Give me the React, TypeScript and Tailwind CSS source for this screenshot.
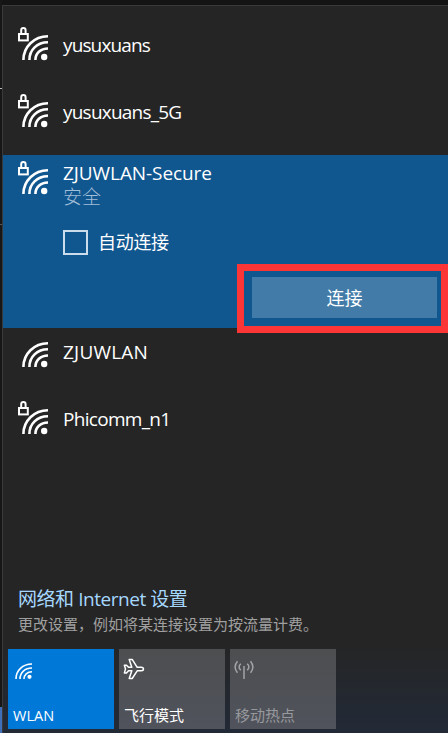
import React from "react";

const latin = "font-['Open_Sans','Noto_Sans_CJK_SC',sans-serif]";
const cjk = "font-['Noto_Sans_CJK_SC',sans-serif]";

function SignalIcon({ locked = false }: { locked?: boolean }) {
  return (
    <svg width="34" height="36" viewBox="0 0 34 36" fill="none" stroke="#fff" className="block shrink-0">
      {locked && (
        <g>
          <path d="M5.2 7.5V4.2a2.2 2.2 0 0 1 4.4 0V7.5" strokeWidth="2" />
          <rect x="3" y="8" width="8.8" height="6.4" strokeWidth="2" />
        </g>
      )}
      <path d="M7.4 34C7.4 21 18 10.2 32 10.2M13.4 34C13.4 24 21 16.3 32 16.3M19.4 34C19.4 27.5 24.5 22.5 32 22.5" strokeWidth="2.6" />
      <circle cx="28.2" cy="31" r="3.2" fill="#fff" stroke="none" />
    </svg>
  );
}

function NetworkName({ children, tracking }: { children: React.ReactNode; tracking: string }) {
  return <span className={`${latin} ${tracking} block whitespace-nowrap text-[19px] leading-6 text-white`}>{children}</span>;
}

function Network({ name, tracking, locked = false }: { name: string; tracking: string; locked?: boolean }) {
  return (
    <div className="flex h-[67px] shrink-0 pt-[5px] pl-[13px]">
      <SignalIcon locked={locked} />
      <div className="ml-[13px] pt-[7px]"><NetworkName tracking={tracking}>{name}</NetworkName></div>
    </div>
  );
}

function SelectedNetwork() {
  return (
    <div className="h-[173px] shrink-0 bg-[#10568f]">
      <div className="flex h-[74px] pt-[5px] pl-[13px]">
        <SignalIcon locked />
        <div className="ml-[13px] pt-[1px]">
          <NetworkName tracking="tracking-[-0.08px]">ZJUWLAN-Secure</NetworkName>
          <div className={`${cjk} text-[19px] leading-[22px] font-light text-[#a3bfd8]`}>安全</div>
        </div>
      </div>
      <div className="flex h-[26px] items-center pl-[60px]">
        <span className="size-[25px] border-2 border-[#cbdcec]" />
        <span className={`${cjk} ml-[10px] text-[18px] leading-[24px] tracking-[-0.3px] text-white pb-[2px]`}>自动连接</span>
      </div>
      <div className="mt-[9px] ml-[234px] h-[69px] w-[211px] border-[7px] border-[#fc3636] pt-[6px] pl-[8px]">
        <button className={`${cjk} block h-[41px] w-[185px] bg-[#427ba8] text-center text-[18px] leading-[41px] text-white`}>连接</button>
      </div>
    </div>
  );
}

function TileSignal() {
  return (
    <svg width="18" height="17" viewBox="0 0 18 17" fill="none" stroke="#fff" strokeWidth="1.6">
      <path d="M1 16C1 7.5 7.5 1 17 1M5 16C5 9.5 10 5 17 5M9 16c0-4.2 3.2-7.2 8-7.2" />
      <circle cx="14.5" cy="13.8" r="2.1" fill="#fff" stroke="none" />
    </svg>
  );
}

function PlaneIcon() {
  return (
    <svg width="22" height="22" viewBox="0 0 22 22" fill="none" stroke="#fff" strokeWidth="1.5" strokeLinejoin="round">
      <path d="M1.4 7.2H3.5L5.5 9.3H8.8L6.2 1.4H9.2L14.2 9.3H18.2C21.2 9.3 21.2 12.8 18.2 12.8H14.2L9.2 20.5H6.2L8.8 12.8H5.5L3.5 14.9H1.4L2.5 11Z" />
    </svg>
  );
}

function HotspotIcon() {
  return (
    <svg width="20" height="20" viewBox="0 0 20 20" fill="none" stroke="#a3a4a6" strokeWidth="1.5">
      <path d="M10 6v13M6.8 3.8Q3.4 7 6.8 10.2M13.2 3.8Q16.6 7 13.2 10.2M3.5 1.2Q-1.3 7 3.5 12.8M16.5 1.2Q21.3 7 16.5 12.8" />
    </svg>
  );
}

export default function App() {
  return (
    <main className="flex h-[733px] w-[448px] overflow-hidden bg-[#141414]">
      <div className="flex w-[2px] shrink-0 flex-col bg-[#171717]">
        <div className="mt-[88px] h-px bg-[#bbb]" />
        <div className="mt-[135px] h-px bg-[#555]" />
        <div className="mt-auto h-[26px] bg-[#3e6fb8]" />
      </div>
      <section className="mt-[5px] flex w-[446px] shrink-0 flex-col border-t border-l border-[#3a3a3a] bg-[linear-gradient(to_bottom,#252525_0,#252525_635px,#222a37_100%)] pt-[15px]">
        <Network name="yusuxuans" tracking="tracking-[-0.87px]" locked />
        <Network name="yusuxuans_5G" tracking="tracking-[-0.78px]" locked />
        <SelectedNetwork />
        <Network name="ZJUWLAN" tracking="tracking-[0.2px]" />
        <Network name="Phicomm_n1" tracking="tracking-[-0.7px]" locked />
        <div className="mt-auto pl-[15px]">
          <div className={`${latin} text-[19px] leading-[26px] tracking-[-0.45px] whitespace-nowrap text-[#a6d8ff]`}>网络和 Internet 设置</div>
          <div className={`${cjk} text-[15px] leading-[24px] whitespace-nowrap text-[#a0a0a0]`}>更改设置，例如将某连接设置为按流量计费。</div>
        </div>
        <div className="mt-[13px] mb-[4px] ml-[5px] flex shrink-0 gap-[5px]">
          <div className="flex h-[80px] w-[106px] flex-col justify-between bg-[#0078d7] pb-[3px]">
            <div className="mt-[14px] ml-[7px]"><TileSignal /></div>
            <span className={`${latin} pl-[5px] text-[14.5px] leading-5 text-white`}>WLAN</span>
          </div>
          <div className="flex h-[80px] w-[106px] flex-col justify-between bg-[linear-gradient(#4d4e50,#50535c)] pb-[4px]">
            <div className="mt-[9px] ml-[4px]"><PlaneIcon /></div>
            <span className={`${cjk} pl-[5px] text-[15px] leading-5 text-white`}>飞行模式</span>
          </div>
          <div className="flex h-[80px] w-[106px] flex-col justify-between bg-[linear-gradient(#4d4e50,#50535c)] pb-[4px]">
            <div className="mt-[11px] ml-[4px]"><HotspotIcon /></div>
            <span className={`${cjk} pl-[5px] text-[15px] leading-5 text-[#97999d]`}>移动热点</span>
          </div>
        </div>
      </section>
    </main>
  );
}
